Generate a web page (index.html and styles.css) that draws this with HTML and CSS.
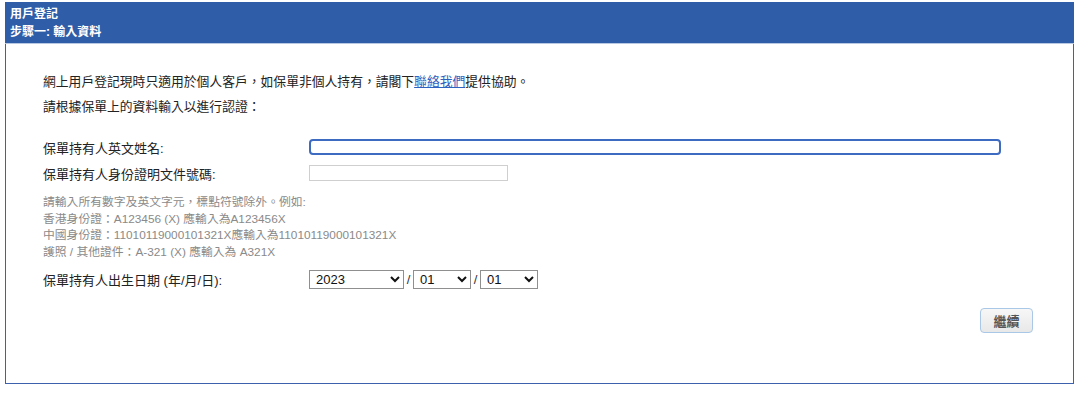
FILE: index.html
```html
<!DOCTYPE html>
<html lang="zh-Hant">
<head>
  <meta charset="UTF-8">
  <title>用戶登記</title>
  <link rel="stylesheet" href="styles.css">
</head>
<body>

  <div class="panel">
    <div class="panel-head">
      <div>用戶登記</div>
      <div>步驟一: 輸入資料</div>
    </div>

    <div class="panel-body">
      <p class="intro">網上用戶登記現時只適用於個人客戶，如保單非個人持有，請閣下<a href="#">聯絡我們</a>提供協助。</p>
      <p class="intro">請根據保單上的資料輸入以進行認證：</p>

      <div class="form">
        <div class="form-row">
          <label for="nameInput">保單持有人英文姓名:</label>
          <div><input type="text" id="nameInput" class="text-input wide is-focused"></div>
        </div>

        <div class="form-row">
          <label for="idInput">保單持有人身份證明文件號碼:</label>
          <div><input type="text" id="idInput" class="text-input short"></div>
        </div>

        <div class="hint">
          <div>請輸入所有數字及英文字元，標點符號除外。例如:</div>
          <div>香港身份證：A123456 (X) 應輸入為A123456X</div>
          <div>中國身份證：11010119000101321X應輸入為11010119000101321X</div>
          <div>護照 / 其他證件：A-321 (X) 應輸入為 A321X</div>
        </div>

        <div class="form-row dob-row">
          <label for="yearSelect">保單持有人出生日期 (年/月/日):</label>
          <div class="dob">
            <select id="yearSelect" class="sel-year"><option>2023</option></select>
            <span class="sep">/</span>
            <select id="monthSelect" class="sel-small"><option>01</option></select>
            <span class="sep">/</span>
            <select id="daySelect" class="sel-small"><option>01</option></select>
          </div>
        </div>
      </div>

      <div class="actions">
        <button type="button" class="btn">繼續</button>
      </div>
    </div>
  </div>

</body>
</html>
```

FILE: styles.css
```css
body {
  margin: 2px 6px 0 5px;
  font-family: "Liberation Sans", "Noto Sans CJK TC", sans-serif;
  font-size: 13px;
  color: #222;
  background: #fff;
}

.panel-head {
  background-color: #2f5da8;
  color: #fff;
  font-weight: bold;
  font-size: 12px;
  line-height: 18px;
  padding: 3px 5px 2px 5px;
  border-bottom: 1px solid #b9c8e2;
}

.panel-body {
  border: 1px solid #3d61ad;
  border-top: none;
  padding: 25px 40px 50px 37px;
}

.intro {
  margin: 0;
  line-height: 25px;
  font-size: 12.8px;
}

.intro a {
  color: #2e62c0;
}

.form {
  margin-top: 15px;
}

.form-row {
  display: grid;
  grid-template-columns: 266px 1fr;
  align-items: center;
  height: 26px;
}

.text-input {
  display: block;
  height: 16px;
  box-sizing: border-box;
  border: 1px solid #cfcfcf;
  padding: 0 4px;
  margin: 0;
  background: #fff;
}

.text-input.wide {
  width: 692px;
}

.text-input.short {
  width: 199px;
}

.text-input.is-focused {
  border: 2px solid #3d6bc2;
  border-radius: 4px;
}

.hint {
  margin-top: 8px;
  color: #8a8a8a;
  font-size: 11.8px;
  line-height: 16.5px;
}

.dob-row {
  margin-top: 6px;
}

.dob {
  display: flex;
  align-items: center;
}

.dob select {
  height: 19px;
  box-sizing: border-box;
  border: 1px solid #8f8f8f;
  border-radius: 0;
  background: #fff;
  font-family: "Liberation Sans", sans-serif;
  font-size: 13px;
  color: #111;
  padding: 0 2px;
  margin: 0;
}

.sel-year {
  width: 95px;
}

.sel-small {
  width: 58px;
}

.sep {
  width: 9px;
  text-align: center;
  color: #333;
}

.actions {
  margin-top: 16px;
  display: flex;
  justify-content: flex-end;
}

.btn {
  width: 53px;
  height: 25px;
  border: 1px solid #a9c7e6;
  border-radius: 4px;
  background: linear-gradient(#f7f7f7, #e8e8e8);
  color: #555;
  font-family: "Liberation Sans", "Noto Sans CJK TC", sans-serif;
  font-size: 13px;
  font-weight: bold;
  padding: 0;
}
```
